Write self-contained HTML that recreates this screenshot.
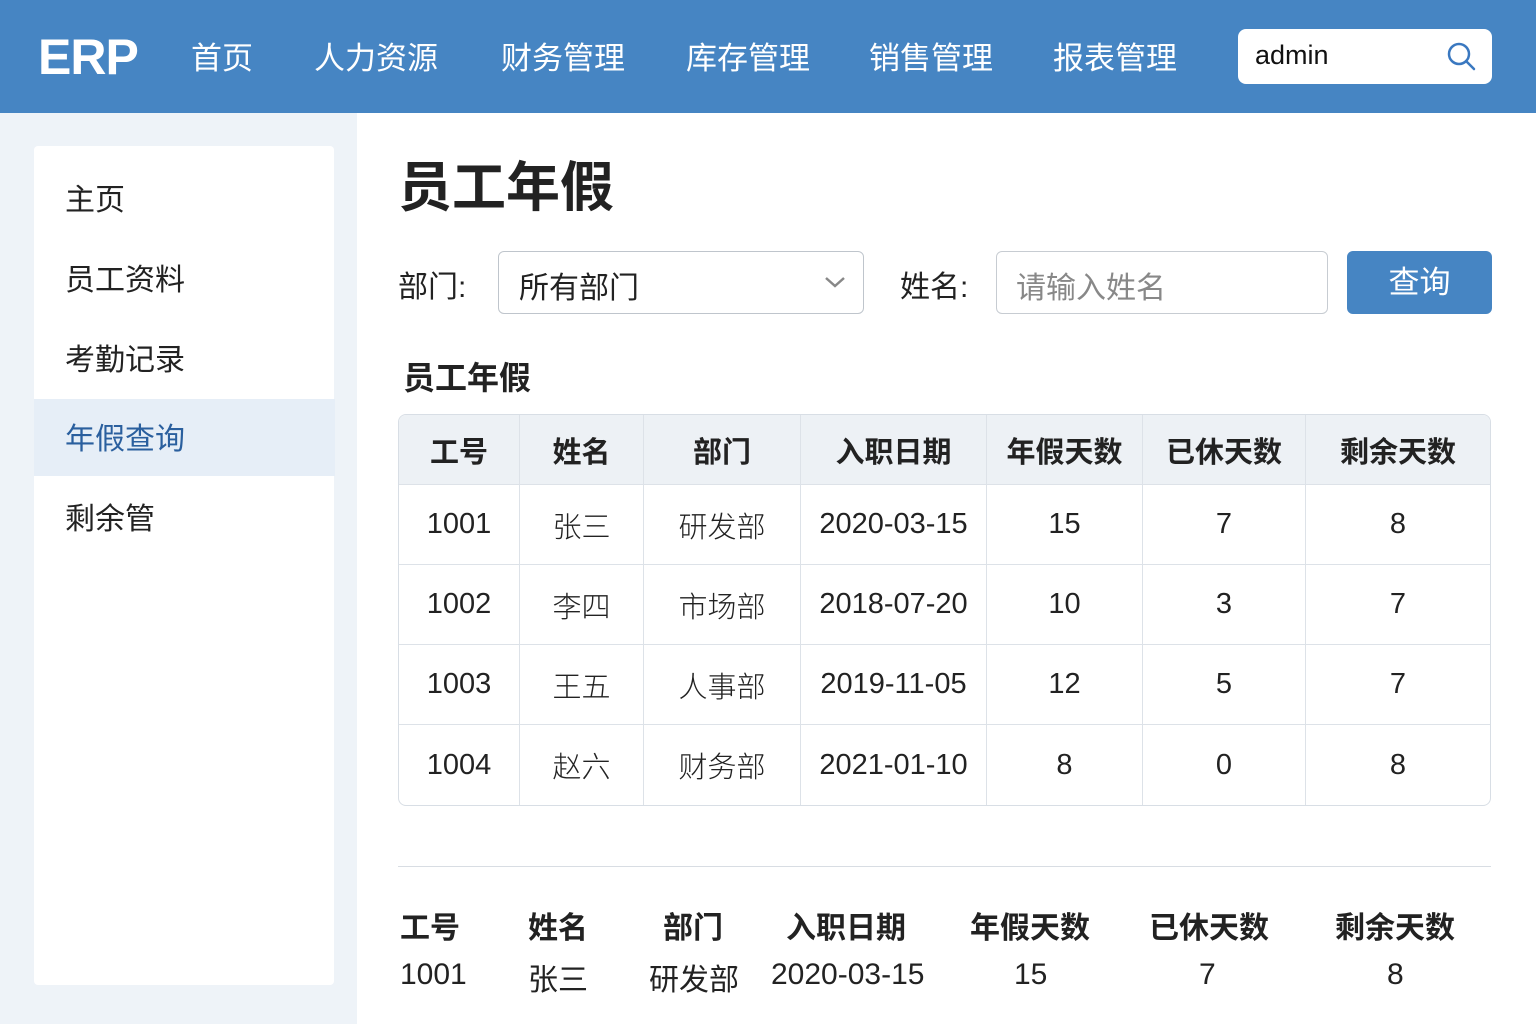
<!DOCTYPE html>
<html><head><meta charset="utf-8"><style>
*{margin:0;padding:0;box-sizing:border-box}
body{width:1536px;height:1024px;overflow:hidden;font-family:"Liberation Sans","Noto Sans CJK SC",sans-serif;background:#fff;position:relative;color:#222}
.hdr{position:absolute;left:0;top:0;width:1536px;height:113px;background:#4685c3}
.logo{position:absolute;left:38px;top:28px;font-size:50px;font-weight:bold;color:#fff;letter-spacing:-1px}
.nav{position:absolute;top:33px;font-size:31px;color:#fff}
.search{position:absolute;left:1238px;top:29px;width:254px;height:55px;background:#fff;border-radius:8px}
.search span{position:absolute;left:17px;top:11px;font-size:27px;color:#111}
.side{position:absolute;left:0;top:113px;width:357px;height:911px;background:#eef3f8}
.card{position:absolute;left:34px;top:146px;width:300px;height:839px;background:#fff;border-radius:4px}
.act{position:absolute;left:34px;top:399px;width:301px;height:77px;background:#e6eef7}
.si{position:absolute;left:65px;font-size:30px;color:#222}
.abs{position:absolute}
table{position:absolute;left:398px;top:414px;width:1093px;border-collapse:separate;border-spacing:0;border:1px solid #d8dee5;border-radius:8px;overflow:hidden}
td,th{text-align:center;font-size:29px;font-weight:normal;border-right:1px solid #dde2e8;border-bottom:1px solid #dde2e8;height:80px;font-family:"DejaVu Sans","Noto Sans CJK SC",sans-serif;font-weight:200}
td{font-family:"Liberation Sans","Noto Sans CJK SC",sans-serif}
th{background:#edf1f5;height:70px;font-weight:bold;color:#222;font-family:"Liberation Sans","Noto Sans CJK SC",sans-serif}
tr td:last-child,tr th:last-child{border-right:none}
tr:last-child td{border-bottom:none}
.b{position:absolute;font-size:30px}
</style></head><body>
<div class="hdr">
<div class="logo">ERP</div>
<div class="nav" style="left:191px">首页</div>
<div class="nav" style="left:314px">人力资源</div>
<div class="nav" style="left:501px">财务管理</div>
<div class="nav" style="left:686px">库存管理</div>
<div class="nav" style="left:869px">销售管理</div>
<div class="nav" style="left:1053px">报表管理</div>
<div class="search"><span>admin</span>
<svg class="abs" style="left:208px;top:12px" width="32" height="32" viewBox="0 0 32 32"><circle cx="13" cy="13" r="10" fill="none" stroke="#3a78c0" stroke-width="2.5"/><line x1="20" y1="20" x2="28" y2="28" stroke="#3a78c0" stroke-width="2.5" stroke-linecap="round"/></svg></div>
</div>
<div class="side"></div>
<div class="card"></div>
<div class="act"></div>
<div class="si" style="top:175px">主页</div>
<div class="si" style="top:255px">员工资料</div>
<div class="si" style="top:335px">考勤记录</div>
<div class="si" style="top:414px;color:#2a5f9e">年假查询</div>
<div class="si" style="top:494px">剩余管</div>
<div class="abs" style="left:398px;top:143px;font-size:54px;font-weight:bold;color:#222">员工年假</div>
<div class="abs" style="left:398px;top:262px;font-size:30px">部门:</div>
<div class="abs" style="left:498px;top:251px;width:366px;height:63px;border:1px solid #bfc5cc;border-radius:6px"><span class="abs" style="left:20px;top:11px;font-size:30px">所有部门</span>
<svg class="abs" style="left:324px;top:22px" width="24" height="16" viewBox="0 0 24 16"><path d="M3 4l9 8 9-8" fill="none" stroke="#888" stroke-width="2.5"/></svg></div>
<div class="abs" style="left:900px;top:262px;font-size:30px">姓名:</div>
<div class="abs" style="left:996px;top:251px;width:332px;height:63px;border:1px solid #c7ccd2;border-radius:6px"><span class="abs" style="left:19px;top:11px;font-size:30px;color:#888">请输入姓名</span></div>
<div class="abs" style="left:1347px;top:251px;width:145px;height:63px;background:#4685c3;border-radius:6px;color:#fff;font-size:31px;text-align:center;line-height:63px">查询</div>
<div class="abs" style="left:403px;top:353px;font-size:32px;font-weight:bold">员工年假</div>
<table>
<tr><th style="width:121px">工号</th><th style="width:124px">姓名</th><th style="width:157px">部门</th><th style="width:186px">入职日期</th><th style="width:156px">年假天数</th><th style="width:163px">已休天数</th><th>剩余天数</th></tr>
<tr><td>1001</td><td>张三</td><td>研发部</td><td>2020-03-15</td><td>15</td><td>7</td><td>8</td></tr>
<tr><td>1002</td><td>李四</td><td>市场部</td><td>2018-07-20</td><td>10</td><td>3</td><td>7</td></tr>
<tr><td>1003</td><td>王五</td><td>人事部</td><td>2019-11-05</td><td>12</td><td>5</td><td>7</td></tr>
<tr><td>1004</td><td>赵六</td><td>财务部</td><td>2021-01-10</td><td>8</td><td>0</td><td>8</td></tr>
</table>
<div class="abs" style="left:398px;top:866px;width:1093px;height:1px;background:#d8dde3"></div>
<div class="b" style="left:400px;top:903px;font-weight:bold">工号</div>
<div class="b" style="left:528px;top:903px;font-weight:bold">姓名</div>
<div class="b" style="left:663px;top:903px;font-weight:bold">部门</div>
<div class="b" style="left:786px;top:903px;font-weight:bold">入职日期</div>
<div class="b" style="left:970px;top:903px;font-weight:bold">年假天数</div>
<div class="b" style="left:1149px;top:903px;font-weight:bold">已休天数</div>
<div class="b" style="left:1335px;top:903px;font-weight:bold">剩余天数</div>
<div class="b" style="left:400px;top:958px">1001</div>
<div class="b" style="left:528px;top:955px">张三</div>
<div class="b" style="left:649px;top:955px">研发部</div>
<div class="b" style="left:771px;top:958px">2020-03-15</div>
<div class="b" style="left:1014px;top:958px">15</div>
<div class="b" style="left:1199px;top:958px">7</div>
<div class="b" style="left:1387px;top:958px">8</div>
</body></html>
